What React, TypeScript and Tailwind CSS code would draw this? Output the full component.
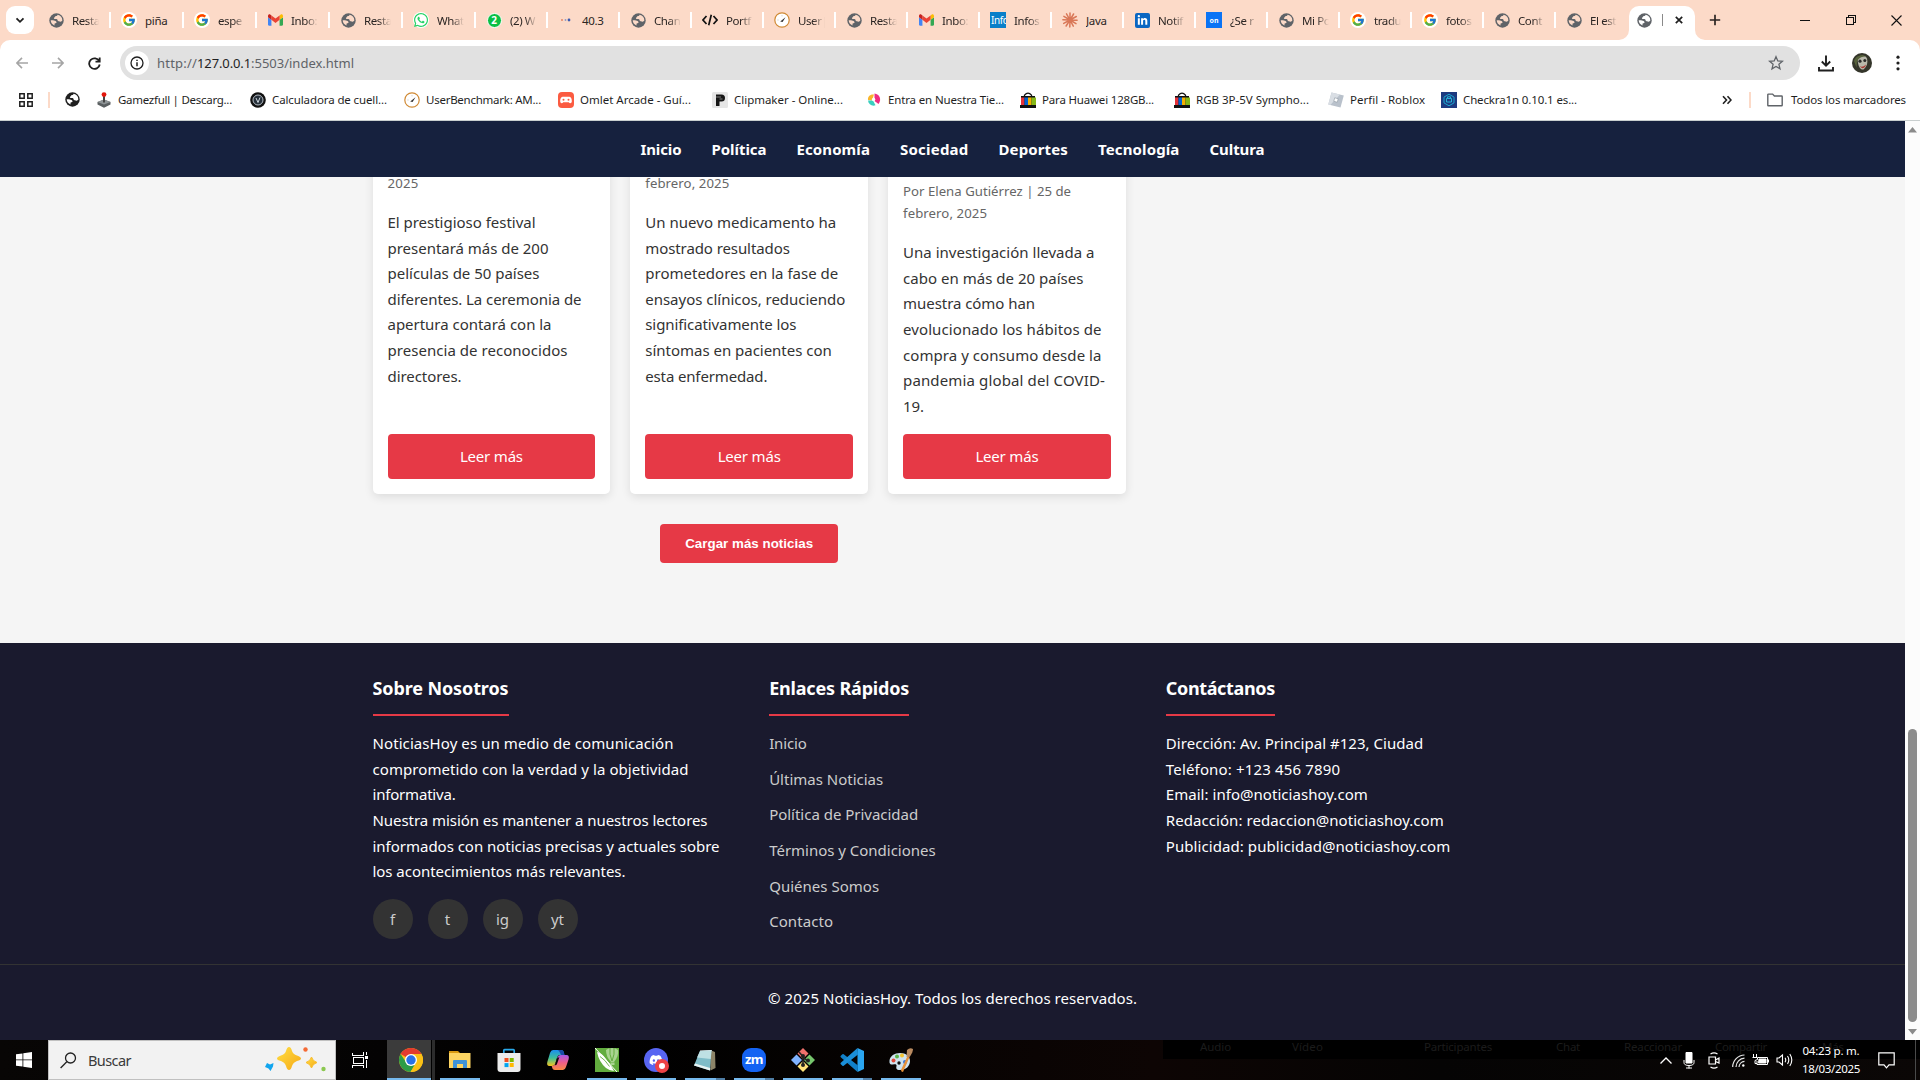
import React, { useLayoutEffect, useRef, useState } from "react";
import { FcGoogle } from "react-icons/fc";
import { FaWhatsapp, FaDiscord, FaLinkedinIn } from "react-icons/fa";

/* A single line of text whose tracking is adjusted to fill a given width. */
function Fit({ w, children, className = "" }: { w: number; children: string; className?: string }) {
  const ref = useRef<HTMLSpanElement>(null);
  const [ls, setLs] = useState(0);
  useLayoutEffect(() => {
    const el = ref.current;
    if (!el) return;
    el.style.letterSpacing = "0px";
    const natural = el.getBoundingClientRect().width;
    const next = (w - natural) / children.length;
    el.style.letterSpacing = `${next}px`;
    setLs(next);
  }, [w, children]);
  return (
    <span ref={ref} className={`inline-block whitespace-pre ${className}`} style={{ letterSpacing: ls }}>
      {children}
    </span>
  );
}

function Globe({ color = "#5f6368", land = "#fcdac8" }: { color?: string; land?: string }) {
  return (
    <svg width="15" height="15" viewBox="0 0 16 16" className="shrink-0">
      <circle cx="8" cy="8" r="7.7" fill={color} />
      <path
        d="M9.2 1.9c-.2 1-.9 1.3-1.8 1.4-.9.1-.8 1.2-1.6 1.4-.9.3-.6 1.5.2 1.6 1.2.1 2.7-.2 3 .9.2.9.3 1.6 1.4 1.5.9-.1 1 .8 1.9.6.7-.2 1.6-.4 1.9-1.3A6.3 6.3 0 0 0 9.200 1.900z"
        fill={land}
      />
      <path
        d="M1.800 7.800c1.200-.3 2.500-.1 3.500.2 1.200.4 2.500.7 2.700 1.900.1.800-.7 1-1.500 1.100-.8.100-.6 1.200-.6 2.300C3.500 12.500 1.900 10.300 1.800 7.800z"
        fill={land}
      />
    </svg>
  );
}

function Gmail() {
  return (
    <svg width="15" height="12" viewBox="52 42 88 66" className="shrink-0">
      <path fill="#4285f4" d="M58 108h14V74L52 59v43c0 3.320 2.690 6 6 6" />
      <path fill="#34a853" d="M120 108h14c3.320 0 6-2.690 6-6V59l-20 15" />
      <path fill="#fbbc04" d="M120 48v26l20-15v-8c0-7.420-8.470-11.650-14.400-7.200" />
      <path fill="#ea4335" d="M72 74V48l24 18 24-18v26L96 92" />
      <path fill="#c5221f" d="M52 51v8l20 15V48l-5.600-4.200c-5.940-4.450-14.400-.220-14.400 7.200" />
    </svg>
  );
}

function Gauge() {
  return (
    <svg width="16" height="16" viewBox="0 0 16 16" className="shrink-0">
      <circle cx="8" cy="8" r="7.200" fill="#fff" stroke="#d08a35" strokeWidth="1.200" />
      <path d="M6.200 9.600 11.500 5.200 8.600 10z" fill="#333" />
      <path d="M3.500 8h1M8 3.300v1" stroke="#aaa" strokeWidth=".7" />
    </svg>
  );
}

function Claude() {
  return (
    <svg width="16" height="16" viewBox="0 0 16 16" className="shrink-0" stroke="#d97757" strokeWidth="1.500" strokeLinecap="round">
      <path d="M8 8V.9M8 8l3.600-6M8 8l6.300-3.500M8 8l7.100.3M8 8l6 3.700M8 8l3.300 6.200M8 8l-.2 7.100M8 8l-3.900 6M8 8l-6.300 3.400M8 8l-7.100-.2M8 8 1.900 4.300M8 8 4.500 1.900" />
    </svg>
  );
}

function tabIcon(kind: string) {
  switch (kind) {
    case "globe":
      return <Globe />;
    case "google":
      return (
        <span className="flex size-4 items-center justify-center rounded-full bg-white">
          <FcGoogle size={14} />
        </span>
      );
    case "gmail":
      return <Gmail />;
    case "whatsapp":
      return (
        <span className="flex size-4 items-center justify-center rounded-full bg-white">
          <FaWhatsapp size={16} color="#25d366" />
        </span>
      );
    case "two":
      return (
        <span className="flex size-[15px] items-center justify-center rounded-full border border-white bg-[#0abf45] text-[10px] leading-none font-bold text-white">
          2
        </span>
      );
    case "dots":
      return (
        <svg width="14" height="14" viewBox="0 0 14 14">
          <circle cx="3" cy="7" r=".9" fill="#e57c5c" />
          <circle cx="6.500" cy="7" r=".9" fill="#8b9ac8" />
          <circle cx="10" cy="7" r="1.400" fill="#3c5bb0" />
        </svg>
      );
    case "code":
      return (
        <svg width="16" height="16" viewBox="0 0 16 16" fill="none" stroke="#111" strokeWidth="1.700">
          <path d="M4.500 4 1 8l3.500 4M11.500 4 15 8l-3.500 4M9.300 2.800l-2.600 10.400" />
        </svg>
      );
    case "gauge":
      return <Gauge />;
    case "info":
      return (
        <span className="flex size-4 items-center overflow-hidden bg-[#0a7fc9] pl-px text-[10px] leading-none tracking-[-0.4px] text-white">Info</span>
      );
    case "claude":
      return <Claude />;
    case "linkedin":
      return (
        <span className="flex size-[15px] items-center justify-center rounded-[2px] bg-[#0a66c2]">
          <FaLinkedinIn size={11} color="#fff" />
        </span>
      );
    default:
      return <span className="flex size-4 items-center justify-center bg-[#0a73f5] text-[7px] leading-none font-bold text-white">on</span>;
  }
}

const tabs: [string, string][] = [
  ["globe", "Resta"],
  ["google", "piña"],
  ["google", "espe"],
  ["gmail", "Inbo:"],
  ["globe", "Resta"],
  ["whatsapp", "What"],
  ["two", "(2) W"],
  ["dots", "40.3"],
  ["globe", "Chan"],
  ["code", "Portf"],
  ["gauge", "User|"],
  ["globe", "Resta"],
  ["gmail", "Inbo:"],
  ["info", "Infos"],
  ["claude", "Java"],
  ["linkedin", "Notif"],
  ["on", "¿Se r"],
  ["globe", "Mi Po"],
  ["google", "tradu"],
  ["google", "fotos"],
  ["globe", "Cont"],
  ["globe", "El est"],
];

function TabStrip() {
  return (
    <div className="flex h-10 bg-[#fcdac8] pl-1.5">
      <div className="mt-1.5 flex h-7 w-7 items-center justify-center rounded-[9px] bg-white">
        <svg width="10" height="10" viewBox="0 0 10 10" fill="none" stroke="#1f1f1f" strokeWidth="1.800">
          <path d="M1.500 3.300 5 6.800l3.500-3.500" />
        </svg>
      </div>
      <div className="ml-1 flex">
        {tabs.map(([kind, title], i) => (
          <div key={i} className={i < 6 ? "flex h-10 w-[73px] items-center pl-2.5" : "flex h-10 w-[72px] items-center pl-2.5"}>
            <span className="flex w-4 shrink-0 justify-center">{tabIcon(kind)}</span>
            <span
              className={
                kind !== "dots" && kind !== "claude" && title !== "piña"
                  ? "ml-2 w-[27px] overflow-hidden [mask-image:linear-gradient(to_right,#000_55%,transparent)] pt-px text-[11.500px] tracking-[-0.400px] whitespace-nowrap text-[#2b2523]"
                  : "ml-2 w-[27px] overflow-hidden pt-px text-[11.500px] tracking-[-0.300px] whitespace-nowrap text-[#2b2523]"
              }
            >
              {title}
            </span>
            {i < tabs.length - 1 && <span className="ml-auto h-4 w-[2px] bg-white" />}
          </div>
        ))}
      </div>
      <div className="relative mt-1.5 ml-px flex h-[34px] w-[66px] items-center rounded-t-[10px] bg-white pb-1.5 pl-2">
        <svg className="absolute bottom-0 -left-2.5" width="10" height="10">
          <path d="M10 0v10H0A10 10 0 0 0 10 0z" fill="#fff" />
        </svg>
        <svg className="absolute -right-2.5 bottom-0" width="10" height="10">
          <path d="M0 0v10h10A10 10 0 0 1 0 0z" fill="#fff" />
        </svg>
        <Globe land="#fff" />
        <span className="ml-[10px] h-3 w-px bg-[#8a8a8a]" />
        <svg className="mr-3 ml-auto" width="8" height="8" viewBox="0 0 8 8" stroke="#1f1f1f" strokeWidth="1.700">
          <path d="M.8.8l6.400 6.400M7.200.8.8 7.200" />
        </svg>
      </div>
      <svg className="mt-[14px] ml-3.5" width="12" height="12" viewBox="0 0 12 12" stroke="#2b2523" strokeWidth="1.700">
        <path d="M6 .8v10.400M.8 6h10.400" />
      </svg>
      <div className="mr-[18px] ml-auto flex items-center gap-[35.500px]">
        <svg width="10" height="10" shapeRendering="crispEdges">
          <path d="M0 5.500h10" stroke="#111" />
        </svg>
        <svg width="10" height="10" fill="none" stroke="#111" shapeRendering="crispEdges">
          <path d="M.5 2.500h7v7h-7zM2.500 2V.5h7v7H8" />
        </svg>
        <svg width="11" height="11" stroke="#111" strokeWidth="1.100">
          <path d="M.5.5l10 10M10.500.5l-10 10" />
        </svg>
      </div>
    </div>
  );
}

function Toolbar() {
  return (
    <div className="bg-[#fcdac8]">
      <div className="flex h-[46px] items-start rounded-t-[10px] bg-white pt-1.5 pl-4">
        <div className="flex h-[34px] items-center">
          <svg width="12" height="12" viewBox="0 0 12 12" fill="none" stroke="#a5a5a5" strokeWidth="1.600">
            <path d="M12 6H1.200M6 .9.900 6 6 11.100" />
          </svg>
          <svg className="ml-6" width="12" height="12" viewBox="0 0 12 12" fill="none" stroke="#a5a5a5" strokeWidth="1.600">
            <path d="M0 6h10.800M6 .9 11.100 6 6 11.100" />
          </svg>
          <svg className="ml-6" width="13" height="13" viewBox="0 0 13 13" fill="none" stroke="#1f1f1f" strokeWidth="1.800">
            <path d="M11.200 4.200A5.300 5.300 0 1 0 11.700 7.500M11.700.5v4.200H7.500" />
          </svg>
        </div>
        <div className="ml-[19px] flex h-[34px] w-[1680px] items-center rounded-full bg-[#e1e1e1] pl-[5px]">
          <span className="flex size-6 items-center justify-center rounded-full bg-white">
            <svg width="14" height="14" viewBox="0 0 14 14" fill="none" stroke="#1f1f1f" strokeWidth="1.300">
              <circle cx="7" cy="7" r="6" />
              <path d="M7 6.200v4M7 3.800v1.300" strokeWidth="1.500" />
            </svg>
          </span>
          <span className="ml-2 pt-px text-[13px] text-[#5f6368]">
            <Fit w={40}>http://</Fit>
            <Fit w={54} className="text-[#1f1f1f]">127.0.0.1</Fit>
            <Fit w={103}>:5503/index.html</Fit>
          </span>
          <svg className="mr-4 ml-auto" width="16" height="16" viewBox="0 0 16 16" fill="none" stroke="#5f6368" strokeWidth="1.300">
            <path d="M8 1.700l1.800 4.200 4.600.4-3.500 3 1.100 4.500L8 11.400l-4 2.400 1.100-4.500-3.500-3 4.600-.4z" />
          </svg>
        </div>
        <div className="ml-[18px] flex h-[34px] items-center">
          <svg width="16" height="17" viewBox="0 0 16 17" fill="none" stroke="#1f1f1f" strokeWidth="1.900">
            <path d="M8 .5v10M3.800 6.500 8 10.700l4.200-4.200M1 12v3.500h14V12" />
          </svg>
          <svg className="ml-[18px]" width="20" height="20" viewBox="0 0 20 20">
            <circle cx="10" cy="10" r="10" fill="#34352a" />
            <path d="M5.500 5.500c1-3 8-4 9.500 0 1 4 0 8-3.500 11-3.500.5-5.500-3-6-11z" fill="#b9b8ab" />
            <path d="M2 8c1-5 8-7.500 12-4.500-4 0-7 1-9 5l-.5 6z" fill="#56613b" />
            <circle cx="8" cy="8.200" r="1.600" fill="#292a28" />
            <circle cx="12.800" cy="7.500" r="1.500" fill="#292a28" />
            <path d="M7.500 13q3 2 6.500-1.500-1 4-4 3.800z" fill="#a83a34" />
          </svg>
          <svg className="ml-6" width="4" height="16" fill="#1f1f1f">
            <circle cx="2" cy="2.200" r="1.600" />
            <circle cx="2" cy="8" r="1.600" />
            <circle cx="2" cy="13.800" r="1.600" />
          </svg>
        </div>
      </div>
    </div>
  );
}

function Bag() {
  return (
    <svg width="16" height="16" viewBox="0 0 16 16">
      <path d="M4.500 5V3.200Q8-1 11.500 3.200V5" fill="none" stroke="#111" strokeWidth="1.300" />
      <path d="M1 4h14v9H1z" fill="#111" />
      <path d="M1 5.500h3.500V13H1z" fill="#e53238" />
      <path d="M4.500 5.500H8V13H4.500z" fill="#0064d2" />
      <path d="M8 5.500h3.500V13H8z" fill="#f5af02" />
      <path d="M11.500 5.500H16V13h-4.500z" fill="#86b817" />
      <path d="M0 13h16v3H0z" fill="#111" />
    </svg>
  );
}

const bookmarks: { icon: React.ReactNode; text: string; w: number }[] = [
  {
    icon: (
      <svg width="16" height="16" viewBox="0 0 16 16">
        <path d="M1.500 10 8 7.500l6.500 2.500v2.500L8 15.800l-6.500-3.300z" fill="#5a5f61" />
        <path d="M1.500 10 8 12.500 14.500 10 8 7.500z" fill="#8e9496" />
        <path d="M7 4h2v6.500H7z" fill="#444" />
        <circle cx="8" cy="2.600" r="2.400" fill="#e3170d" />
      </svg>
    ),
    text: "Gamezfull | Descarg...",
    w: 114,
  },
  {
    icon: (
      <svg width="16" height="16" viewBox="0 0 16 16">
        <circle cx="8" cy="8" r="7.800" fill="#111" />
        <circle cx="8" cy="8" r="5" fill="#26303a" stroke="#b5bcc4" strokeWidth="1" />
        <path d="M6 6l2 4.500L10 5.500" stroke="#cfd8e0" fill="none" />
      </svg>
    ),
    text: "Calculadora de cuell...",
    w: 115,
  },
  { icon: <Gauge />, text: "UserBenchmark: AM...", w: 115 },
  {
    icon: (
      <svg width="16" height="16" viewBox="0 0 16 16">
        <rect width="16" height="16" rx="4" fill="#fb5b41" />
        <path d="M4.500 4.800h7c1.500 0 2.500 2.500 2.300 4.800-.2 2-2.300 2-3 .6H5.200c-.7 1.400-2.800 1.400-3-.6C2 7.300 3 4.800 4.500 4.800z" fill="#fff" />
        <circle cx="5.500" cy="7.700" r="1" fill="#fb5b41" />
        <circle cx="10.500" cy="7.700" r="1" fill="#fb5b41" />
      </svg>
    ),
    text: "Omlet Arcade - Guí...",
    w: 111,
  },
  {
    icon: (
      <svg width="16" height="16" viewBox="0 0 16 16">
        <rect width="16" height="16" rx="1.500" fill="#e6e6e6" />
        <path d="M4 2.500h5.500a3.500 3.500 0 0 1 0 7H7.500V14H4z" fill="#161616" />
        <path d="M4 5h5M7.500 7h3" stroke="#999" strokeWidth=".8" />
      </svg>
    ),
    text: "Clipmaker - Online...",
    w: 109,
  },
  {
    icon: (
      <svg width="16" height="16" viewBox="0 0 16 16">
        <path d="M8 2.500C4 2 1.500 4.500 2 8l4 .5z" fill="#f9b52b" />
        <path d="M2 8.500c.5 4 4 6 7.500 4.800L7 8.500z" fill="#38cfc0" />
        <path d="M8.500 1.500c5 .5 7.500 6 4 10.500L8.500 9z" fill="#ef2c80" />
        <circle cx="7.600" cy="7.500" r="1.700" fill="#fff" />
      </svg>
    ),
    text: "Entra en Nuestra Tie...",
    w: 116,
  },
  { icon: <Bag />, text: "Para Huawei 128GB...", w: 112 },
  { icon: <Bag />, text: "RGB 3P-5V Sympho...", w: 113 },
  {
    icon: (
      <svg width="16" height="16" viewBox="0 0 16 16">
        <path d="M3.500.5 15.800 3.500 12.500 15.500.300 12.500z" fill="#b9c1cb" />
        <path d="M3.500.5 12 2.600 2.300 13 .300 12.500z" fill="#d9dee4" />
        <path d="M6.700 5.800l3.500.9-.9 3.500-3.500-.9z" fill="#fff" stroke="#8c959f" strokeWidth=".6" />
      </svg>
    ),
    text: "Perfil - Roblox",
    w: 75,
  },
  {
    icon: (
      <svg width="16" height="16" viewBox="0 0 16 16" fill="none">
        <path d="M0 0h16v16H0z" fill="#1d3a80" />
        <path d="M8 2.200l5 2.900v5.800l-5 2.900-5-2.900V5.100z" stroke="#1aa7cf" />
        <path d="M5.500 6.500h5v3.500h-5zM6.500 6V4.800h3V6" stroke="#27c0e0" strokeWidth=".9" />
      </svg>
    ),
    text: "Checkra1n 0.10.1 es...",
    w: 114,
  },
];

function BookmarkBar() {
  return (
    <div className="flex h-[34px] items-center bg-white pb-[7px] pl-[19px] text-[11.500px] text-[#1f1f1f]">
      <svg width="14" height="14" viewBox="0 0 14 14" fill="none" stroke="#1f1f1f" strokeWidth="1.500">
        <path d="M.8.8h4.400v4.400H.8zM8.800.8h4.400v4.400H8.800zM.8 8.800h4.400v4.400H.8zM8.800 8.800h4.400v4.400H8.800z" />
      </svg>
      <span className="ml-[15px] h-4 w-[2px] bg-[#fcdac8]" />
      <span className="ml-[15px]">
        <Globe color="#1f1f1f" land="#fff" />
      </span>
      <div className="ml-4 flex">
        {bookmarks.map((b, i) => (
          <div key={i} className={i === 8 ? "flex w-[113px] items-center gap-1.5" : "flex w-[154px] items-center gap-1.5"}>
            {b.icon}
            <Fit w={b.w}>{b.text}</Fit>
          </div>
        ))}
      </div>
      <div className="mr-[14px] ml-auto flex items-center">
        <svg width="10" height="10" viewBox="0 0 10 10" fill="none" stroke="#1f1f1f" strokeWidth="1.600">
          <path d="M1 1.200 4.500 5 1 8.800M5.500 1.200 9 5 5.500 8.800" />
        </svg>
        <span className="ml-[17px] h-4 w-[2px] bg-[#fcdac8]" />
        <svg className="mr-2 ml-4" width="16" height="14" viewBox="0 0 16 14" fill="none" stroke="#5f6368" strokeWidth="1.400">
          <path d="M.8 12.300V1.700q0-.6.600-.6h4.200L7.400 3h7.200q.6 0 .6.600v8.700q0 .5-.6.500H1.400q-.6 0-.6-.5z" />
        </svg>
        <Fit w={115}>Todos los marcadores</Fit>
      </div>
    </div>
  );
}

type Line = [string, number];

const nav: Line[] = [
  ["Inicio", 41],
  ["Política", 55],
  ["Economía", 73.5],
  ["Sociedad", 68.5],
  ["Deportes", 69.5],
  ["Tecnología", 81.5],
  ["Cultura", 55],
];

const cards: { meta: Line[]; body: Line[]; short: boolean }[] = [
  {
    meta: [["2025", 31]],
    body: [
      ["El prestigioso festival", 148],
      ["presentará más de 200", 161],
      ["películas de 50 países", 152],
      ["diferentes. La ceremonia de", 194],
      ["apertura contará con la", 164],
      ["presencia de reconocidos", 180],
      ["directores.", 74],
    ],
    short: true,
  },
  {
    meta: [["febrero, 2025", 84]],
    body: [
      ["Un nuevo medicamento ha", 191],
      ["mostrado resultados", 144.5],
      ["prometedores en la fase de", 193],
      ["ensayos clínicos, reduciendo", 200],
      ["significativamente los", 151],
      ["síntomas en pacientes con", 186.5],
      ["esta enfermedad.", 122],
    ],
    short: true,
  },
  {
    meta: [
      ["Por Elena Gutiérrez | 25 de", 168],
      ["febrero, 2025", 84],
    ],
    body: [
      ["Una investigación llevada a", 191.5],
      ["cabo en más de 20 países", 180.5],
      ["muestra cómo han", 132],
      ["evolucionado los hábitos de", 198.5],
      ["compra y consumo desde la", 198.5],
      ["pandemia global del COVID-", 202],
      ["19.", 21],
    ],
    short: false,
  },
];

const about: Line[] = [
  ["NoticiasHoy es un medio de comunicación", 301],
  ["comprometido con la verdad y la objetividad", 316],
  ["informativa.", 83],
  ["Nuestra misión es mantener a nuestros lectores", 335],
  ["informados con noticias precisas y actuales sobre", 347],
  ["los acontecimientos más relevantes.", 253],
];
const links: Line[] = [
  ["Inicio", 37.5],
  ["Últimas Noticias", 114],
  ["Política de Privacidad", 149],
  ["Términos y Condiciones", 166.5],
  ["Quiénes Somos", 110],
  ["Contacto", 64],
];
const contact: Line[] = [
  ["Dirección: Av. Principal #123, Ciudad", 257.5],
  ["Teléfono: +123 456 7890", 174.5],
  ["Email: info@noticiashoy.com", 202],
  ["Redacción: redaccion@noticiashoy.com", 278],
  ["Publicidad: publicidad@noticiashoy.com", 284.5],
];

function Lines({ items }: { items: Line[] }) {
  return (
    <>
      {items.map(([t, w]) => (
        <div key={t}>
          <Fit w={w}>{t}</Fit>
        </div>
      ))}
    </>
  );
}

function Heading({ text, w }: { text: string; w: number }) {
  return (
    <h3 className="mb-[15.500px] w-fit border-b-2 border-[#e63946] pb-2.5 text-[18px] leading-[30.700px] font-bold">
      <Fit w={w} className="block">{text}</Fit>
    </h3>
  );
}

function Page() {
  return (
    <div className="flex h-[919px] w-[1905px] flex-col bg-[#f5f5f5] text-[15px] leading-[25.600px] text-[#333]">
      <nav className="z-10 flex h-14 shrink-0 items-center justify-center gap-[30px] bg-[#16213e] pt-px font-bold text-white">
        {nav.map(([t, w]) => (
          <Fit key={t} w={w}>{t}</Fit>
        ))}
      </nav>
      <main className="ml-[372.500px] flex h-[466px] w-[753.300px] shrink-0 flex-col self-start">
        <div className="-mt-10 flex gap-5">
          {cards.map((c, i) => (
            <article key={i} className="flex h-[357px] w-[237.780px] flex-col justify-end rounded-[5px] bg-white p-[15px] shadow-[0_3px_10px_rgba(0,0,0,0.1)]">
              <div className="mb-[15.600px] text-[13.200px] leading-[22.400px] text-[#666]">
                <Lines items={c.meta} />
              </div>
              <div className={c.short ? "mb-[44.800px]" : "mb-[14.600px]"}>
                <Lines items={c.body} />
              </div>
              <div className="flex h-[45px] items-center justify-center rounded-[4px] bg-[#e63946] pt-px text-white">
                <Fit w={63}>Leer más</Fit>
              </div>
            </article>
          ))}
        </div>
        <div className="mt-[30px] flex h-[39px] w-[178px] items-center justify-center self-center rounded-[4px] bg-[#e63946] font-['Liberation_Sans',sans-serif] text-[13.333px] font-bold text-white">
          <Fit w={128}>Cargar más noticias</Fit>
        </div>
      </main>
      <footer className="flex-1 bg-[#1a1a2e] pt-[30px] text-white">
        <div className="mx-auto mb-5 grid h-[271.300px] w-[1160px] grid-cols-3 gap-[30px]">
          <div>
            <Heading text="Sobre Nosotros" w={136} />
            <Lines items={about} />
            <div className="mt-[14.500px] flex gap-[15px] text-[#ccc]">
              {["f", "t", "ig", "yt"].map((s) => (
                <span key={s} className="flex size-10 items-center justify-center rounded-full bg-[#333] pt-px">{s}</span>
              ))}
            </div>
          </div>
          <div>
            <Heading text="Enlaces Rápidos" w={140} />
            <div className="flex flex-col gap-2.5 text-[#ccc]">
              <Lines items={links} />
            </div>
          </div>
          <div>
            <Heading text="Contáctanos" w={109} />
            <Lines items={contact} />
          </div>
        </div>
        <div className="border-t border-[#333] pt-[20.800px] text-center">
          <Fit w={369}>© 2025 NoticiasHoy. Todos los derechos reservados.</Fit>
        </div>
      </footer>
    </div>
  );
}

function Scrollbar() {
  return (
    <div className="flex w-[15px] flex-col items-center bg-[#fcfcfc] pt-[6px] pb-[5px]">
      <svg width="9" height="6">
        <path d="M4.500 0 9 5.500H0z" fill="#8b8b8b" />
      </svg>
      <div className="mt-auto h-[293px] w-[9px] rounded-full bg-[#8b8b8b]" />
      <svg className="mt-[7px]" width="9" height="6">
        <path d="M4.500 5.500 9 0H0z" fill="#8b8b8b" />
      </svg>
    </div>
  );
}

const apps: { icon: React.ReactNode; bar: string }[] = [
  {
    bar: "active",
    icon: (
      <svg width="24" height="24" viewBox="0 0 24 24">
        <circle cx="12" cy="12" r="12" fill="#fbc116" />
        <path d="M12 12 1.600 6A12 12 0 0 1 22.400 6z" fill="#e33b2e" />
        <path d="M1.600 6A12 12 0 0 0 11.500 24L17 14.500 7.200 14.500z" fill="#2c9c47" />
        <path d="M12 6h10.400A12 12 0 0 1 11.500 24l5.700-9z" fill="#fbc116" />
        <circle cx="12" cy="12" r="6" fill="#fff" />
        <circle cx="12" cy="12" r="4.700" fill="#2a72e8" />
      </svg>
    ),
  },
  {
    bar: "single",
    icon: (
      <svg width="24" height="24" viewBox="0 0 24 24">
        <path d="M1 3h9l2 2H1z" fill="#d99a12" />
        <path d="M1 5h21.500v15H1z" fill="#fcd462" />
        <path d="M5 20v-7q0-1 1-1h12q1 0 1 1v7h-4v-4H9v4z" fill="#3f93d8" />
      </svg>
    ),
  },
  {
    bar: "none",
    icon: (
      <svg width="24" height="24" viewBox="0 0 24 24">
        <path d="M6.800 5V2.500q0-.8.800-.8h8.800q.8 0 .8.800V5" fill="none" stroke="#29a9ea" strokeWidth="1.700" />
        <path d="M.5 5h23v16q0 3-3 3h-17q-3 0-3-3z" fill="#ececec" />
        <path d="M7.500 10h4v4h-4z" fill="#f25022" />
        <path d="M12.700 10h4v4h-4z" fill="#7fba00" />
        <path d="M7.500 15.100h4v4h-4z" fill="#00a4ef" />
        <path d="M12.700 15.100h4v4h-4z" fill="#ffb900" />
      </svg>
    ),
  },
  {
    bar: "none",
    icon: (
      <svg width="24" height="24" viewBox="0 0 24 24">
        <defs>
          <linearGradient id="cpA" x1="0" y1="0" x2="0" y2="1">
            <stop offset="0" stopColor="#1c8df0" />
            <stop offset=".5" stopColor="#3cbf9a" />
            <stop offset="1" stopColor="#f6c51c" />
          </linearGradient>
          <linearGradient id="cpB" x1="0" y1="0" x2="0" y2="1">
            <stop offset="0" stopColor="#a659e8" />
            <stop offset=".5" stopColor="#ee5d8a" />
            <stop offset="1" stopColor="#f98a42" />
          </linearGradient>
        </defs>
        <path d="M7 2h8q2.500 0 3 3l.4 2H14q-2 0-2.700 2l-2 6.500Q8.700 18 6 18H3.500Q.4 18 1.300 14L4 5q1-3 3-3z" fill="url(#cpA)" />
        <path d="M17 22H9q-2.500 0-3-3l-.3-1q3 0 4-3l2-6q.8-2 3-2h5.800q3 0 2.200 4L20 19q-1 3-3 3z" fill="url(#cpB)" />
        <path d="M11.500 2H15q2.500 0 3 3l.4 2H15q-2-5-3.500-5z" fill="#1b4aa8" />
        <path d="M10.800 10.500l2.600-1.500-2.600 7.500-2 1z" fill="#0b0808" />
      </svg>
    ),
  },
  {
    bar: "single",
    icon: (
      <svg width="24" height="24" viewBox="0 0 24 24">
        <path d="M0 0h24v24H0z" fill="#62ad3e" />
        <path d="M2 4q5 1 9 7 5 6 8 12-4 0-8-3Q4 14 2 4z" fill="#fff" />
        <path d="M0 0 22 24" stroke="#fff" strokeWidth="1" />
        <path d="M5 8.500q5 3 9.500 10" stroke="#62ad3e" strokeWidth=".9" fill="none" />
        <path d="M11 2q2-2 6-2t6 2q1 6-4 12h-3Q11 9 11 2z" fill="#a9d490" />
        <path d="M15 0q-1 6 2 13M19 0q1 6-2 13" stroke="#62ad3e" fill="none" />
        <path d="M15.500 14.500h4v2.500h-4z" fill="#a9d490" />
      </svg>
    ),
  },
  {
    bar: "single",
    icon: (
      <span className="relative flex size-6 items-center justify-center rounded-full bg-[#5865f2]">
        <FaDiscord size={14} color="#fff" />
        <span className="absolute -right-[1px] -bottom-[1px] size-[14px] rounded-full border-4 border-[#ed4245] bg-white" />
      </span>
    ),
  },
  {
    bar: "double",
    icon: (
      <svg width="24" height="24" viewBox="0 0 24 24">
        <path d="M17 2l5 2 .5 16-5 2.500z" fill="#8d8468" />
        <path d="M7 3 18.500 2 17 22.500 1 17.500z" fill="#7fbcc8" />
        <path d="M7 3 18.500 2l-.8 9L4 9.500z" fill="#bfe0e4" />
        <path d="M1 17.500l16 5 .2-2.500L2 15.500z" fill="#e8f3f3" />
        <path d="M7.500 2.500h11.500" stroke="#eee" strokeDasharray="1 1" />
      </svg>
    ),
  },
  {
    bar: "double",
    icon: <span className="flex size-6 items-center justify-center rounded-[9px] bg-[#1463f3] pb-0.5 text-[13px] leading-none font-bold tracking-[-0.600px] text-white">zm</span>,
  },
  {
    bar: "single",
    icon: (
      <svg width="24" height="24" viewBox="0 0 24 24">
        <path d="M12 0l5.500 5.500L12 11 6.500 5.500z" fill="#f0716c" />
        <path d="M5.500 6.500 11 12l-5.500 5.500L0 12z" fill="#80b3ff" />
        <path d="M18.500 6.500 24 12l-5.500 5.500L13 12z" fill="#76c66d" />
        <path d="M12 13l5.500 5.500L12 24l-5.500-5.500z" fill="#ffe37a" />
        <path d="M8 4l4 4.500v9M12 9l4.500 4" stroke="#222" strokeWidth="1.600" fill="none" />
        <circle cx="12" cy="8" r="2" fill="#222" />
        <circle cx="12" cy="17" r="2" fill="#222" />
        <circle cx="17" cy="12.500" r="2" fill="#222" />
      </svg>
    ),
  },
  {
    bar: "double",
    icon: (
      <svg width="24" height="24" viewBox="0 0 24 24">
        <path d="M17.500 0 24 3v18l-6.500 3L17.500 0z" fill="#2aa5f0" />
        <path d="M17.500 24 .8 9.300Q0 8.500.8 7.800l1.600-1.500q.6-.5 1.300 0L18 17.500z" fill="#1180c8" />
        <path d="M17.500 0 .8 14.700q-.8.800 0 1.500l1.600 1.500q.6.500 1.300 0L18 6.500z" fill="#1a8fd9" />
      </svg>
    ),
  },
  {
    bar: "single",
    icon: (
      <svg width="24" height="24" viewBox="0 0 24 24">
        <path d="M11 5c6 0 10 3 10 8s-4 9-10 9c-4 0-4-2-3.500-4S6 16 4 16.500 0 16 .5 12.500C1 8 5.500 5 11 5z" fill="#cfe3f0" />
        <circle cx="4.500" cy="12.500" r="2" fill="#e04a3a" />
        <circle cx="8" cy="8.500" r="2" fill="#5ab54a" />
        <circle cx="13" cy="7.500" r="2" fill="#f4c430" />
        <circle cx="10" cy="15" r="1.700" fill="#111" />
        <circle cx="16" cy="14" r="2" fill="#3c78d8" />
        <path d="M18 9l3-1-7 16q-2 0-2-2z" fill="#e8923a" />
        <path d="M17.500 9 18 2q3-3 6-1 0 3-3 7.500z" fill="#b98a60" />
      </svg>
    ),
  },
];

const meeting: { t: string; w: number; cls: string }[] = [
  { t: "Audio", w: 31, cls: "ml-[37px]" },
  { t: "Vídeo", w: 31, cls: "ml-[61px]" },
  { t: "Participantes", w: 68, cls: "ml-[101px]" },
  { t: "Chat", w: 24, cls: "ml-16" },
  { t: "Reaccionar", w: 58, cls: "ml-11" },
  { t: "Compartir", w: 52, cls: "ml-[33px]" },
  { t: "Más", w: 22, cls: "ml-[55px]" },
];

function Taskbar() {
  return (
    <div className="relative flex h-10 bg-[linear-gradient(90deg,#080605_0%,#040303_20%,#000_32%,#070302_48%,#0d0504_60%,#050404_75%,#0b0706_100%)] text-white">
      <div className="absolute top-0 right-0 flex h-[19px] w-[757px] items-center bg-black pb-[6px] text-[11.500px] leading-none text-[#1c1c1c]">
        {meeting.map((m) => (
          <span key={m.t} className={m.cls}>
            <Fit w={m.w}>{m.t}</Fit>
          </span>
        ))}
      </div>
      <div className="flex w-12 items-center justify-center">
        <svg width="16" height="16" viewBox="0 0 16 16" fill="#fff">
          <path d="M0 2.300 6.500 1.400v6.100H0zM7.300 1.300 16 0v7.500H7.300zM0 8.300h6.500v6.300L0 13.700zM7.300 8.300H16V16l-8.700-1.300z" />
        </svg>
      </div>
      <div className="flex w-72 items-center border border-[#c0c0c0] bg-[#f2f2f2] pl-[11px]">
        <svg width="17" height="17" viewBox="0 0 17 17" fill="none" stroke="#222" strokeWidth="1.300">
          <circle cx="10.500" cy="6" r="5" />
          <path d="M6.800 9.700.6 16" />
        </svg>
        <span className="ml-[11px] pt-px text-[14.500px] text-[#3a3a3a]">
          <Fit w={43}>Buscar</Fit>
        </span>
        <svg className="mr-[7px] ml-auto" width="64" height="30" viewBox="0 0 64 30">
          <defs>
            <linearGradient id="star" x1="0" y1="0" x2="1" y2="1">
              <stop offset="0" stopColor="#ffdf45" />
              <stop offset="1" stopColor="#f6a916" />
            </linearGradient>
          </defs>
          <path d="M25 2q2 0 3 4 1 3 5 4.500 4 1.500 4 3t-4 2.500q-4 1.500-5 5-1 4-3 4t-3-4q-1-3.500-5-5-4-1-4-2.500t4-3q4-1.500 5-4.500 1-4 3-4z" fill="url(#star)" />
          <path d="M47.500 12q1 4 5.500 5.500-4.500 1.500-5.500 5.500-1-4-5.500-5.500 4.500-1.500 5.500-5.500z" fill="url(#star)" stroke="#f9bd2c" />
          <path d="M3 18l3 1.500L9.500 18 9 21.500 6.500 26 4.500 23.500 1 22z" fill="#12a5ee" />
          <circle cx="41.500" cy="4.500" r="2.200" fill="#f46a35" />
          <circle cx="59.500" cy="24" r="2.200" fill="#8bc850" />
        </svg>
      </div>
      <div className="flex w-[51px] items-center justify-center">
        <svg className="mr-[3px]" width="17" height="16" viewBox="0 0 17 16" fill="none" stroke="#fff" shapeRendering="crispEdges">
          <path d="M.5.500V3.500H11.500V0M1.500 5.500h10v6h-10zM.5 16v-2.500h11V16M14.500 0v3M14.500 8v8" />
          <path d="M13.500 4.500h2v2h-2z" fill="#fff" />
        </svg>
      </div>
      {apps.map((a, i) => (
        <div key={i} className={a.bar === "active" ? "relative flex w-12 items-center justify-center bg-[#3b3b3b]" : "relative ml-px flex w-12 items-center justify-center"}>
          {a.icon}
          {a.bar === "active" && <span className="absolute bottom-0 left-0 h-0.5 w-11 bg-[#76b9ed]" />}
          {a.bar === "active" && <span className="absolute top-0 right-0 h-full w-1 border-l border-black bg-[#2c2c2c]" />}
          {(a.bar === "single" || a.bar === "double") && <span className="absolute bottom-0 left-1 h-0.5 w-10 bg-[#76b9ed]" />}
          {a.bar === "double" && <span className="absolute right-1 bottom-0 h-0.5 w-[9px] bg-[#4f7ea5]" />}
        </div>
      ))}
      <div className="relative mr-1 ml-auto flex items-center">
        <svg width="12" height="7" viewBox="0 0 12 7" fill="none" stroke="#fff" strokeWidth="1.300">
          <path d="M.5 6.500 6 1l5.500 5.500" />
        </svg>
        <svg className="ml-[11px]" width="12" height="17" viewBox="0 0 12 17" fill="none" stroke="#fff">
          <path d="M3 .5h6V11H3z" fill="#fff" />
          <path d="M1 8v2.500Q1 13.500 6 13.500T11 10.500V8M6 13.500v3M3 16h6" />
        </svg>
        <svg className="ml-[13px]" width="13" height="17" viewBox="0 0 13 17" fill="none" stroke="#fff" strokeWidth="1.200">
          <path d="M2.500 2Q6-.2 9.500 2M2.500 15Q6 17.200 9.500 15M1 5h6.500v7H1zM7.500 8l3.500-2v5L7.500 9.500" />
        </svg>
        <svg className="ml-[11px]" width="13" height="13" viewBox="0 0 13 13" fill="none" stroke="#e6e6e6" strokeWidth="1.200">
          <path d="M.7 13A12 12 0 0 1 12.500 1M4 13a9 9 0 0 1 8.500-8.800M7 13a6 6 0 0 1 5.500-5.700" />
          <circle cx="11.300" cy="11.500" r="1.200" fill="#fff" stroke="none" />
        </svg>
        <svg className="ml-[7px]" width="17" height="12" viewBox="0 0 17 12" fill="none" stroke="#fff">
          <path d="M1.500 0v3M4.500 0v3M.5 3.500h5v2L3 6.500v3h2M6 3.500h9.500v7H5V7" />
          <path d="M7 5h7v4H6.500z" fill="#fff" />
          <path d="M16.500 5.500v3" />
        </svg>
        <svg className="ml-[7px]" width="17" height="14" viewBox="0 0 17 14" fill="none" stroke="#fff" strokeWidth="1.100">
          <path d="M1 5h2l3.500-3v10L3 9H1zM9 4.800q1.500 2.200 0 4.400M11.500 3q2.600 4 0 8M13.800 1q4 6 0 12" />
        </svg>
        <div className="ml-2 flex w-[60px] flex-col items-center text-[11.500px] leading-[18px]">
          <Fit w={57}>04:23 p. m.</Fit>
          <Fit w={58}>18/03/2025</Fit>
        </div>
        <svg className="ml-[17px]" width="17" height="17" viewBox="0 0 17 17" fill="none" stroke="#fff" strokeWidth="1.200">
          <path d="M.8.800h15.400v12H11l-2.500 3-2.500-3H.8z" />
        </svg>
        <span className="ml-5 h-10 w-px bg-[#4a4a4a]" />
      </div>
    </div>
  );
}

export default function App() {
  return (
    <div className="flex h-[1080px] w-[1920px] flex-col overflow-hidden bg-white font-['Noto_Sans','Open_Sans',sans-serif]">
      <TabStrip />
      <Toolbar />
      <BookmarkBar />
      <div className="h-px shrink-0 bg-[#c9cfcf]" />
      <div className="flex h-[919px] overflow-hidden">
        <Page />
        <Scrollbar />
      </div>
      <Taskbar />
    </div>
  );
}
